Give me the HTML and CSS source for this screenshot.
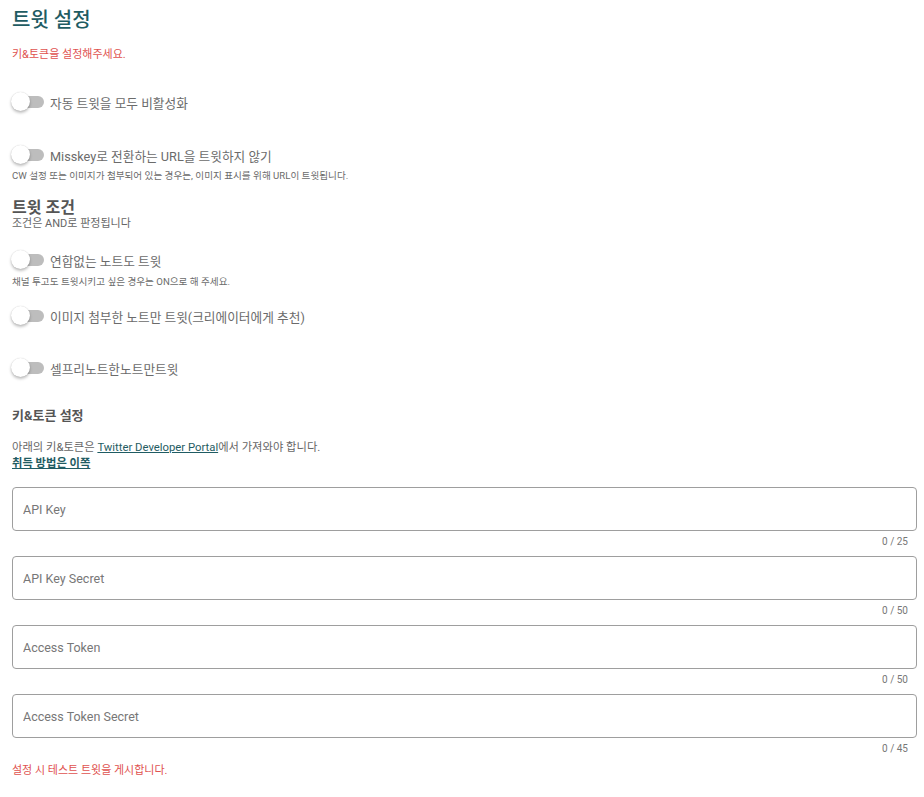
FILE: index.html
```html
<!DOCTYPE html>
<html>
<head>
	<title>트윗 설정</title>
	<link rel="stylesheet" href="styles.css">
</head>
<body>
	<div class="page">
		<h1 class="title">트윗 설정</h1>
		<p class="warn warn-top">키&amp;토큰을 설정해주세요.</p>

		<div class="switch row1"><span class="track"><span class="thumb"></span></span><span class="label">자동 트윗을 모두 비활성화</span></div>

		<div class="switch row2"><span class="track"><span class="thumb"></span></span><span class="label">Misskey로 전환하는 URL을 트윗하지 않기</span></div>
		<p class="hint">CW 설정 또는 이미지가 첨부되어 있는 경우는, 이미지 표시를 위해 URL이 트윗됩니다.</p>

		<h2 class="subhead">트윗 조건</h2>
		<p class="note">조건은 AND로 판정됩니다</p>

		<div class="switch row3"><span class="track"><span class="thumb"></span></span><span class="label">연합없는 노트도 트윗</span></div>
		<p class="hint">채널 투고도 트윗시키고 싶은 경우는 ON으로 해 주세요.</p>

		<div class="switch row4"><span class="track"><span class="thumb"></span></span><span class="label">이미지 첨부한 노트만 트윗(크리에이터에게 추천)</span></div>

		<div class="switch row5"><span class="track"><span class="thumb"></span></span><span class="label">셀프리노트한노트만트윗</span></div>

		<h3 class="section">키&amp;토큰 설정</h3>
		<p class="desc">아래의 키&amp;토큰은 <a href="#">Twitter Developer Portal</a>에서 가져와야 합니다.<br><a href="#" class="strong">취득 방법은 이쪽</a></p>

		<div class="fields">
			<div class="field">
				<input type="text" placeholder="API Key">
				<div class="counter">0 / 25</div>
			</div>
			<div class="field">
				<input type="text" placeholder="API Key Secret">
				<div class="counter">0 / 50</div>
			</div>
			<div class="field">
				<input type="text" placeholder="Access Token">
				<div class="counter">0 / 50</div>
			</div>
			<div class="field">
				<input type="text" placeholder="Access Token Secret">
				<div class="counter">0 / 45</div>
			</div>
		</div>

		<p class="warn warn-bottom">설정 시 테스트 트윗을 게시합니다.</p>
	</div>
</body>
</html>
```
FILE: styles.css
```css
body {
	margin: 0;
	background: #fff;
	font-family: Roboto, "Noto Sans CJK KR", sans-serif;
	color: #666;
}

.page {
	padding: 0 7px 20px 12px;
}

p, h1, h2, h3 {
	margin: 0;
}

.title {
	margin-top: 8px;
	font-size: 20px;
	line-height: 24px;
	font-weight: 500;
	color: #1f5c63;
}

.warn {
	font-size: 11px;
	line-height: 16px;
	color: #e0524f;
}

.warn-top {
	margin-top: 15px;
}

.warn-bottom {
	margin-top: 7px;
}

/* toggles */
.switch {
	display: flex;
	align-items: center;
	height: 24px;
}

.row1 { margin-top: 27px; }
.row2 { margin-top: 29px; }
.row3 { margin-top: 17px; }
.row4 { margin-top: 15px; }
.row5 { margin-top: 28px; }

.track {
	position: relative;
	width: 30px;
	height: 12px;
	margin-left: 2px;
	border-radius: 6px;
	background: #bdbdbd;
}

.thumb {
	position: absolute;
	left: -3px;
	top: -4px;
	width: 19px;
	height: 19px;
	border-radius: 50%;
	background: #fff;
	box-shadow: 0 2px 3px rgba(0, 0, 0, 0.25), 0 0 1px rgba(0, 0, 0, 0.2);
}

.label {
	margin-left: 6px;
	font-size: 12.7px;
	color: #6b6b6b;
}

.hint {
	margin-top: 2px;
	font-size: 9.6px;
	line-height: 14px;
	color: #6b6b6b;
}

.row3 + .hint {
	margin-top: 3px;
}

.subhead {
	margin-top: 16px;
	font-size: 16px;
	line-height: 18px;
	font-weight: 700;
	color: #555;
}

.note {
	font-size: 11px;
	line-height: 14px;
	color: #666;
}

.section {
	margin-top: 27px;
	font-size: 13px;
	line-height: 18px;
	font-weight: 700;
	color: #555;
}

.desc {
	margin-top: 15px;
	font-size: 11.3px;
	line-height: 16px;
	color: #666;
}

.desc a {
	color: #1f5c63;
	text-decoration: underline;
}

.desc .strong {
	font-weight: 600;
}

/* text fields */
.fields {
	margin-top: 15px;
}

.field input {
	display: block;
	box-sizing: border-box;
	width: 100%;
	height: 44px;
	padding: 0 10px;
	border: 1px solid #9e9e9e;
	border-radius: 4px;
	font-family: Roboto, "Noto Sans CJK KR", sans-serif;
	font-size: 12.5px;
	color: #444;
	outline: none;
}

.field input::placeholder {
	color: #777;
}

.counter {
	margin-top: 4px;
	padding-right: 9px;
	height: 14px;
	line-height: 14px;
	text-align: right;
	font-size: 10px;
	color: #777;
}

.field + .field {
	margin-top: 7px;
}
```
